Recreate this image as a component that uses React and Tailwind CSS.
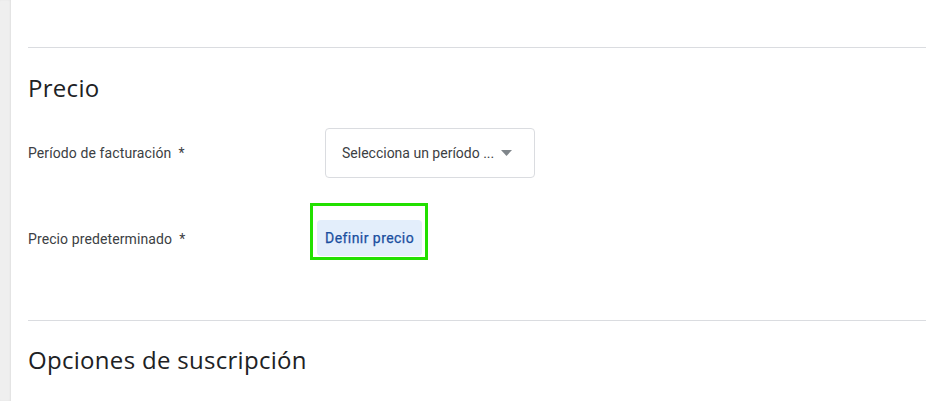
export default function App() {
  return (
    <div className="flex h-[401px] w-[926px] overflow-hidden bg-white font-['Roboto',sans-serif]">
      <div className="w-[11px] shrink-0 bg-[#efefef] shadow-[inset_-1px_0_2px_rgba(0,0,0,0.06)]" />
      <main className="flex-1 pl-[17px] pt-[47px]">
        <section className="border-t border-[#dadce0] pt-[24px] pb-[64px]">
          <h2 className="font-['Open_Sans',sans-serif] text-[24px] leading-[32px] tracking-[0.3px] text-[#202124]">
            Precio
          </h2>
          <div className="mt-[24px] flex items-center">
            <div className="w-[297px] text-[14px] tracking-[0.1px] text-[#3c4043]">
              Período de facturación&nbsp; *
            </div>
            <button className="flex h-[50px] w-[210px] items-center gap-[7px] rounded-[4px] border border-[#dadce0] bg-white pl-4 text-[14px] text-[#3c4043]">
              <span>Selecciona un período ...</span>
              <svg width="11" height="6" viewBox="0 0 11 6">
                <path d="M0 0h11L5.5 6z" fill="#80868b" />
              </svg>
            </button>
          </div>
          <div className="mt-[42px] flex items-center">
            <div className="w-[289px] pt-[2px] text-[14px] tracking-[0.1px] text-[#3c4043]">
              Precio predeterminado&nbsp; *
            </div>
            <div className="relative">
              <button className="h-[36px] rounded-[4px] bg-[#e3eefb] px-2 text-[14px] font-normal tracking-[0.45px] text-[#1a4f9f] [-webkit-text-stroke:0.25px_#1a4f9f]">
                Definir precio
              </button>
              <div className="absolute -left-[7px] -top-[17px] -right-[6px] -bottom-[4px] border-[3px] border-[#22e000]" />
            </div>
          </div>
        </section>
        <section className="border-t border-[#dadce0] pt-[23px]">
          <h2 className="font-['Open_Sans',sans-serif] text-[24px] leading-[32px] tracking-[0.3px] text-[#202124]">
            Opciones de suscripción
          </h2>
        </section>
      </main>
    </div>
  );
}
